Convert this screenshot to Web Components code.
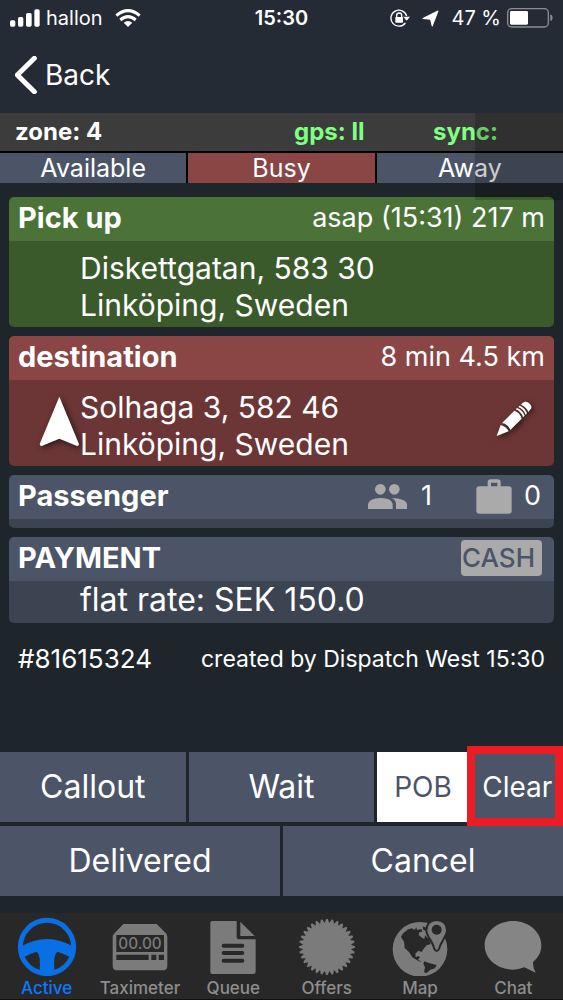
<!DOCTYPE html>
<html lang="en">
<head>
<meta charset="utf-8">
<meta name="viewport" content="width=device-width, initial-scale=1">
<title>Active job</title>
<style>
html, body { margin: 0; background: #1e252b; }
body { font-family: Inter, "Liberation Sans", sans-serif; color: #fff; }
</style>
</head>
<body>
<taxi-app></taxi-app>
<script>
const define = (name, html, setup) => {
  const template = document.createElement('template');
  template.innerHTML = html;
  customElements.define(name, class extends HTMLElement {
    connectedCallback() {
      if (this.shadowRoot) return;
      const root = this.attachShadow({ mode: 'open' });
      root.append(template.content.cloneNode(true));
      if (setup) setup(root, this);
    }
  });
};

define('status-bar', `
<style>
:host { display: grid; grid-template-columns: 1fr auto 1fr; align-items: center; height: 36px; padding: 0 10px; font-size: 20px; line-height: 24px; }
div { display: flex; align-items: center; }
.right { justify-content: flex-end; }
time { font-weight: 600; }
svg { display: block; flex: none; }
.carrier { margin: 0 12px 0 6px; }
.loc { margin: 0 12px; }
.bat { margin-left: 6px; }
</style>
<div>
  <svg width="30" height="18" viewBox="0 0 90 54" fill="#fff"><rect y="34" width="16" height="19" rx="5"/><rect x="24" y="24" width="16" height="29" rx="5"/><rect x="48" y="12" width="17" height="41" rx="5"/><rect x="73" y="1" width="16" height="52" rx="5"/></svg>
  <span class="carrier">hallon</span>
  <svg width="26" height="18" viewBox="0 0 78 54"><g fill="none" stroke="#fff" stroke-width="9"><path d="M4 20Q39-10 74 20"/><path d="M16 33Q39 13 62 33"/></g><path d="M26 41Q39 31 52 41L39 54Z" fill="#fff"/></svg>
</div>
<time>15:30</time>
<div class="right">
  <svg width="20" height="18" viewBox="0 0 60 54"><path d="M46 42A24 24 0 1 1 50 21" fill="none" stroke="#fff" stroke-width="4"/><path d="M40 23H60L50 35Z" fill="#fff"/><rect x="16" y="24" width="23" height="17" rx="2" fill="#fff"/><path d="M20 25V19Q20 12 27.500 12T35 19V25" fill="none" stroke="#fff" stroke-width="4"/></svg>
  <svg class="loc" width="17" height="17" viewBox="0 0 50 50"><path d="M47 3L30 47L25 27L3 25Z" fill="#fff" stroke="#fff" stroke-width="3" stroke-linejoin="round"/></svg>
  <span>47 %</span>
  <svg class="bat" width="46" height="20" viewBox="0 0 138 60"><rect x="2" y="2" width="122" height="55" rx="12" fill="none" stroke="#8a8e94" stroke-width="4"/><rect x="9" y="9" width="54" height="41" rx="4" fill="#fff"/><path d="M130 19Q137 22 137 29T130 40Z" fill="#8a8e94"/></svg>
</div>`);

define('nav-header', `
<style>
:host { display: flex; align-items: center; height: 77px; padding-left: 15px; }
button { display: flex; align-items: center; gap: 8px; padding: 0; border: 0; background: none; color: inherit; font: 28px/36px Inter, "Liberation Sans", sans-serif; }
svg { display: block; }
</style>
<button type="button"><svg width="22" height="38" viewBox="0 0 66 114"><path d="M58 7L7 57L58 107" fill="none" stroke="#fff" stroke-width="15" stroke-linecap="round" stroke-linejoin="round"/></svg><span>Back</span></button>`);

define('driver-state', `
<style>
:host { display: block; position: relative; }
.info { display: grid; grid-template-columns: 279fr 139fr 130fr; align-items: center; height: 38px; padding-left: 15px; background: #3c3c3c; font-size: 24px; line-height: 30px; font-weight: 700; }
.ok { color: #80ff80; }
.seg { display: grid; grid-template-columns: repeat(3, 1fr); gap: 2px; padding-top: 2px; background: #000; }
button { height: 30px; padding: 0; border: 0; background: #4b5567; color: inherit; font: 25px/30px Inter, "Liberation Sans", sans-serif; }
button[aria-pressed=true] { background: #8a4545; }
.shade { position: absolute; top: 0; right: 0; width: 88px; height: 87px; background: #0003; pointer-events: none; }
</style>
<div class="info"><span>zone: 4</span><span class="ok">gps: ll</span><span class="ok">sync:</span></div>
<div class="seg"><button type="button" aria-pressed="false">Available</button><button type="button" aria-pressed="true">Busy</button><button type="button" aria-pressed="false">Away</button></div>
<div class="shade"></div>`);

define('job-card', `
<style>
:host { display: block; border-radius: 5px; overflow: hidden; --head: #4b5567; --body: #3c4452; }
:host([tone=green]) { --head: #4b7338; --body: #3b5a2b; }
:host([tone=red]) { --head: #8a4545; --body: #6c3636; }
header { display: flex; align-items: center; justify-content: space-between; height: 42px; padding: 0 9px 2px; background: var(--head); font-size: 27px; line-height: 32px; }
h2 { margin: 0; font-size: 29px; line-height: 34px; font-weight: 700; }
.body { display: flex; align-items: center; min-height: 9px; background: var(--body); font-size: 30px; line-height: 37px; }
.lead { display: flex; justify-content: flex-end; width: 71px; }
.main { flex: 1; }
</style>
<header><h2><slot name="title"></slot></h2><slot name="meta"></slot></header>
<div class="body"><div class="lead"><slot name="lead"></slot></div><div class="main"><slot></slot></div><slot name="action"></slot></div>`);

define('job-details', `
<style>
:host { display: grid; gap: 9px; padding: 14px 9px 0; }
address, p { margin: 0; font-style: normal; }
address { padding: 9px 0 3px; }
p { padding-bottom: 5px; font-size: 32px; }
svg { display: block; }
button { padding: 0 0 4px; border: 0; background: none; color: inherit; }
.shadow { filter: drop-shadow(2px 2px 3px #0009); }
.pencil { margin-right: 22px; padding-bottom: 8px; }
.counts { display: flex; align-items: center; margin-right: 4px; }
.people { margin-right: 14px; }
.bag { margin: 0 12px 0 44px; }
.cash { margin-right: 3px; padding: 0 7px 0 1px; border-radius: 4px; background: #aaa; color: #4b5567; font-size: 26px; line-height: 36px; font-weight: 500; }
.meta { display: flex; align-items: center; justify-content: space-between; padding: 12px 0 0 9px; line-height: 30px; font-size: 26px; }
.meta small { margin-right: 9px; font-size: 23px; }
</style>
<job-card tone="green"><span slot="title">Pick up</span><span slot="meta">asap (15:31) 217 m</span><address>Diskettgatan, 583 30<br>Linköping, Sweden</address></job-card>
<job-card tone="red"><span slot="title">destination</span><span slot="meta">8 min 4.5 km</span>
<button slot="lead" type="button" aria-label="Navigate" class="shadow"><svg width="41" height="50" viewBox="0 0 123 150"><path d="M61 2L120 144Q120 150 114 150L61 128L8 150Q2 150 2 144Z" fill="#fff"/></svg></button>
<address>Solhaga 3, 582 46<br>Linköping, Sweden</address>
<button slot="action" type="button" aria-label="Edit destination" class="shadow pencil"><svg width="36" height="36" viewBox="0 0 108 108"><g fill="#fff"><path d="M2 105L14 72Q30 76 38 91Z"/><path d="M18 66L55 29Q72 34 77 53L43 87Q36 69 18 66Z"/><path d="M59 25L63 21Q80 28 86 44L81 49Q76 32 59 25Z"/><path d="M67 18L71 14Q87 21 93 37L89 41Q83 25 67 18Z"/><path d="M75 11L80 6Q90-2 101 8T101 28L97 33Q91 18 75 11Z"/></g></svg></button></job-card>
<job-card><span slot="title">Passenger</span><div slot="meta" class="counts">
<svg class="people" width="39" height="25" viewBox="0 0 117 75" fill="#aaa" role="img" aria-label="Passengers"><circle cx="37" cy="16" r="16"/><circle cx="79" cy="16" r="16"/><path d="M0 75V60Q4 43 37 42T74 60V75Z"/><path d="M72 42Q113 43 117 60V75H84V60Q84 50 72 42Z"/></svg><span>1</span>
<svg class="bag" width="36" height="35" viewBox="0 0 108 105" fill="#aaa" role="img" aria-label="Bags"><path d="M40 24V9Q40 6 44 6H65Q69 6 69 9V24" fill="none" stroke="#aaa" stroke-width="10"/><rect x="1" y="22" width="106" height="82" rx="9"/></svg><span>0</span></div></job-card>
<job-card><span slot="title">PAYMENT</span><span slot="meta" class="cash">CASH</span><p>flat rate: SEK 150.0</p></job-card>
<div class="meta"><span>#81615324</span><small>created by Dispatch West 15:30</small></div>`);

define('job-actions', `
<style>
:host { display: grid; grid-template-columns: repeat(6, 1fr); gap: 4px 3px; margin-top: auto; padding-bottom: 17px; }
div { position: relative; display: grid; }
button { width: 100%; height: 70px; padding: 0; border: 0; background: #4b5567; color: inherit; font: 32px/40px Inter, "Liberation Sans", sans-serif; }
.two { grid-column: span 2; }
.three { grid-column: span 3; }
.small { font-size: 28px; }
.on { background: #fff; color: #4b5567; }
.mark { position: absolute; inset: -6px 0 -4px -5px; border: 8px solid #ed1c24; pointer-events: none; }
</style>
<button class="two" type="button">Callout</button><button class="two" type="button">Wait</button><button class="small on" type="button">POB</button><div><button class="small" type="button">Clear</button><span class="mark"></span></div>
<button class="three" type="button">Delivered</button><button class="three" type="button">Cancel</button>`);

define('tab-item', `
<style>
:host { display: block; min-width: 0; color: #8d8d8d; }
:host([current]) { color: #087aff; }
a { display: flex; flex-direction: column; align-items: center; gap: 2px; color: inherit; text-decoration: none; font-size: 17px; line-height: 20px; font-weight: 500; white-space: nowrap; }
</style>
<a href="#"><slot name="icon"></slot><span><slot></slot></span></a>`);

define('tab-bar', `
<style>
:host { display: block; background: #282828; border-bottom: 1px solid #111; }
nav { display: grid; grid-template-columns: repeat(6, 1fr); padding: 3px 3px 1px 0; }
svg { display: block; width: 62px; height: 60px; fill: #7b7b7b; }
.hole { fill: #282828; }
text { font-size: 46px; font-family: Inter, "Liberation Sans", sans-serif; }
</style>
<nav>
<tab-item current><svg slot="icon" viewBox="44 33 186 180"><circle cx="137" cy="126" r="80" fill="none" stroke="#0870e4" stroke-width="15"/><path d="M57 126Q137 78 217 126A80 80 0 0 1 57 126Z" fill="#0870e4"/><path class="hole" d="M70 155Q90 144 106 140Q119 150 115 194Q85 186 70 155ZM204 155Q184 144 168 140Q155 150 159 194Q189 186 204 155Z"/></svg>Active</tab-item>
<tab-item><svg slot="icon" viewBox="329 33 186 180"><path d="M372 57H472L500 85Q504 90 504 96V182Q504 196 490 196H354Q340 196 340 182V96Q340 90 344 86Z"/><path class="hole" d="M351 90H494V141H351ZM351 149H448V165H351ZM456 149H471V165H456ZM478 149H494V165H478Z"/><text x="422" y="133" text-anchor="middle">00.00</text></svg>Taximeter</tab-item>
<tab-item><svg slot="icon" viewBox="610 33 186 180"><path d="M641 48H714V95Q714 103 722 103H771V200Q771 207 764 207H641Q635 207 635 200V54Q635 48 641 48ZM725 50L768 93H725Z"/><path d="M675 122H731M675 144H731M675 167H731" stroke="#282828" stroke-width="12" stroke-linecap="round"/></svg>Queue</tab-item>
<tab-item><svg slot="icon" viewBox="43 33 186 180"><path id="burst"/></svg>Offers</tab-item>
<tab-item><svg slot="icon" viewBox="325 33 186 180"><circle cx="418" cy="133" r="82"/><path class="hole" d="M361 96L366 86L380 74L392 70L403 74L406 66L410 75L422 72L425 80L416 82L414 90L424 98L431 102L433 91L445 103L450 117L438 121L430 130L423 141L413 137L404 146L405 157L413 153L418 157L412 164L424 172L413 168L395 157L385 141L372 129L370 110ZM431 169L445 174L468 180L463 190L449 194L438 204L430 202L433 187L428 176ZM426 64L436 68L438 78L428 75Z"/><path d="M468 45C449 45 437 58 437 76C437 94 460 115 460 130Q468 146 476 130C477 115 499 94 499 76C499 58 487 45 468 45Z" stroke="#282828" stroke-width="6"/><circle class="hole" cx="468" cy="74" r="15"/></svg>Map</tab-item>
<tab-item><svg slot="icon" viewBox="607 33 186 180"><path fill="#858585" d="M700 48C747 48 785 80 785 121C785 142 776 158 760 171Q759 187 768 203L734 187Q717 194 700 194C653 194 615 162 615 121S653 48 700 48Z"/></svg>Chat</tab-item>
</nav>`, root => {
  const teeth = 32, points = [];
  for (let i = 0; i < teeth; i++) {
    for (const [offset, r] of [[-0.14, 84], [0.14, 84], [0.5, 72]]) {
      const a = (i + offset) / teeth * Math.PI * 2 - Math.PI / 2;
      points.push((136 + r * Math.cos(a)).toFixed(1) + ' ' + (126 + r * Math.sin(a)).toFixed(1));
    }
  }
  root.getElementById('burst').setAttribute('d', 'M' + points.join('L') + 'Z');
});

define('taxi-app', `
<style>
:host { display: flex; flex-direction: column; min-height: 100vh; }
.top { background: #252b35; }
main { display: contents; }
</style>
<div class="top"><status-bar></status-bar><nav-header></nav-header></div>
<main><driver-state></driver-state><job-details></job-details><job-actions></job-actions></main>
<tab-bar></tab-bar>`);
</script>
</body>
</html>
